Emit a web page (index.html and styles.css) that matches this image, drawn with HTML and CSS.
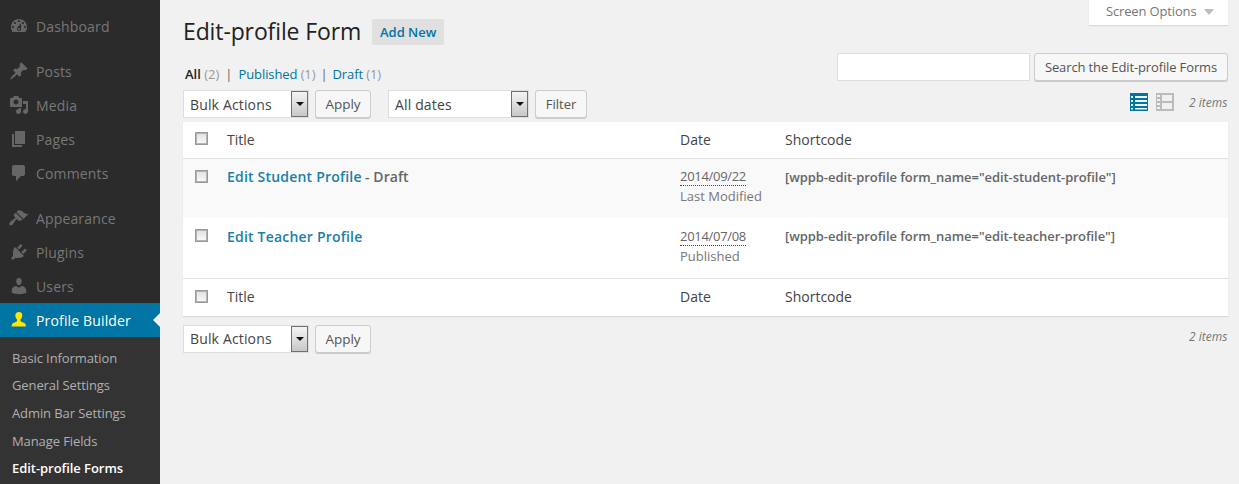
FILE: index.html
```html
<!DOCTYPE html>
<html lang="en">
<head>
<meta charset="utf-8">
<title>Edit-profile Forms</title>
<link rel="stylesheet" href="styles.css">
</head>
<body>
<div class="layout">
  <nav class="sidebar">
    <ul class="menu">
      <li class="item group-end"><svg class="ico" viewBox="0 0 20 20"><path d="M3.76 16h12.48c1.1-1.37 1.76-3.11 1.76-5 0-4.42-3.58-8-8-8s-8 3.58-8 8c0 1.89.66 3.63 1.76 5zM10 4c.55 0 1 .45 1 1s-.45 1-1 1-1-.45-1-1 .45-1 1-1zM6 6c.55 0 1 .45 1 1s-.45 1-1 1-1-.45-1-1 .45-1 1-1zm8 0c.55 0 1 .45 1 1s-.45 1-1 1-1-.45-1-1 .45-1 1-1zm-5.37 5.55L12 7v6c0 1.1-.9 2-2 2s-2-.9-2-2c0-.57.24-1.08.63-1.45zM4 10c.55 0 1 .45 1 1s-.45 1-1 1-1-.45-1-1 .45-1 1-1zm12 0c.55 0 1 .45 1 1s-.45 1-1 1-1-.45-1-1 .45-1 1-1zm-5 3c0-.55-.45-1-1-1s-1 .45-1 1 .45 1 1 1 1-.45 1-1z"/></svg>Dashboard</li>
      <li class="item"><svg class="ico" viewBox="0 0 20 20"><path d="M10.44 3.02l1.82-1.82 6.36 6.35-1.83 1.82c-1.05-.68-2.48-.57-3.41.36l-.75.75c-.92.93-1.04 2.35-.35 3.41l-1.83 1.82-2.41-2.41-2.8 2.79c-.42.42-3.38 2.71-3.8 2.29s1.86-3.39 2.28-3.81l2.79-2.79L4.1 9.36l1.83-1.82c1.05.69 2.48.57 3.4-.36l.75-.75c.93-.92 1.05-2.35.36-3.41z"/></svg>Posts</li>
      <li class="item"><svg class="ico" viewBox="0 0 20 20"><path d="M13 11V4c0-.55-.45-1-1-1h-1.67L9 1H5L3.67 3H2c-.55 0-1 .45-1 1v7c0 .55.45 1 1 1h10c.55 0 1-.45 1-1zM7 4.5c1.38 0 2.5 1.12 2.5 2.5S8.38 9.5 7 9.5 4.5 8.38 4.5 7 5.62 4.5 7 4.5zM14 6h5v10.5c0 1.38-1.12 2.5-2.5 2.5S14 17.88 14 16.5s1.12-2.5 2.5-2.5c.17 0 .34.02.5.05V9h-3V6zm-4 8.05V13h2v3.5c0 1.38-1.12 2.5-2.5 2.5S7 17.88 7 16.5 8.12 14 9.5 14c.17 0 .34.02.5.05z"/></svg>Media</li>
      <li class="item"><svg class="ico" viewBox="0 0 20 20"><path d="M6 15V2h10v13H6zm-1 1h8v2H3V5h2v11z"/></svg>Pages</li>
      <li class="item group-end"><svg class="ico" viewBox="0 0 20 20"><path d="M5 2h9c1.1 0 2 .9 2 2v7c0 1.1-.9 2-2 2h-2l-5 5v-5H5c-1.1 0-2-.9-2-2V4c0-1.1.9-2 2-2z"/></svg>Comments</li>
      <li class="item"><svg class="ico" viewBox="0 0 20 20"><path d="M14.48 11.06L7.41 3.99l1.5-1.5c.5-.56 2.3-.47 3.51.32 1.21.8 1.43 1.28 2.91 2.1 1.18.64 2.45 1.26 4.45.85zm-.71.71L6.7 4.7 4.93 6.47c-.39.39-.39 1.02 0 1.41l1.06 1.06c.39.39.39 1.03 0 1.42-.6.6-1.43 1.11-2.21 1.69-.78.58-1.9 1.08-2.66 1.85-1 1-1.25 2.3-.5 3.05.75.75 2.05.5 3.05-.5.77-.76 1.27-1.88 1.85-2.66.58-.78 1.09-1.61 1.69-2.21.39-.39 1.02-.39 1.41 0l1.06 1.06c.39.39 1.02.39 1.41 0z"/></svg>Appearance</li>
      <li class="item"><svg class="ico" viewBox="0 0 20 20"><path d="M13.11 4.36L9.87 7.6 8 5.73l3.24-3.24c.35-.34 1.05-.2 1.56.32.52.51.66 1.21.31 1.55zm-8 1.77l.91-1.12 9.01 9.01-1.19.84c-.71.71-2.63 1.16-3.82 1.16H6.14L4.9 17.26c-.59.59-1.54.59-2.12 0-.59-.58-.59-1.53 0-2.12l1.24-1.24v-3.88c0-1.13.4-3.19 1.09-3.89zm7.26 3.97l3.24-3.24c.34-.35 1.04-.21 1.55.31.52.51.66 1.21.31 1.55l-3.24 3.25z"/></svg>Plugins</li>
      <li class="item"><svg class="ico" viewBox="0 0 20 20"><path d="M10 9.25c-2.27 0-2.73-3.44-2.73-3.44C7 4.02 7.82 2 9.97 2c2.16 0 2.98 2.02 2.71 3.81 0 0-.41 3.44-2.68 3.44zm0 2.57L12.72 10c2.39 0 4.52 2.33 4.52 4.53v2.49s-3.65 1.13-7.24 1.13c-3.65 0-7.24-1.13-7.24-1.13v-2.49c0-2.25 1.94-4.48 4.47-4.48z"/></svg>Users</li>
      <li class="item active"><svg class="ico" viewBox="0 0 20 20"><path d="M10 2c2.300 0 3.500 1.700 3.300 3.800-.2 1.500-.9 3-1.700 3.700-.3.500-.2 1.500.4 1.900 1 .7 3 1 4 2 .6.600.9 1.800 1 3.100H2.600c.1-1.300.4-2.500 1-3.100 1-1 3-1.300 4-2 .6-.4.7-1.400.4-1.900-.8-.7-1.500-2.200-1.700-3.700C6.100 3.700 7.700 2 10 2z"/></svg>Profile Builder</li>
    </ul>
    <ul class="submenu">
      <li>Basic Information</li>
      <li>General Settings</li>
      <li>Admin Bar Settings</li>
      <li>Manage Fields</li>
      <li class="current">Edit-profile Forms</li>
    </ul>
  </nav>

  <main class="content">
    <header class="head">
      <h1 class="page-title">Edit-profile Form</h1>
      <a class="add-new">Add New</a>
      <div class="screen-options">Screen Options<span class="tri"></span></div>
    </header>

    <div class="row-status">
      <ul class="views">
        <li class="first"><b class="view-current">All</b> <span class="count">(2)</span><span class="sep">|</span></li>
        <li><a class="link">Published</a> <span class="count">(1)</span><span class="sep">|</span></li>
        <li><a class="link">Draft</a> <span class="count">(1)</span></li>
      </ul>
      <form class="search">
        <input class="search-input" type="text" aria-label="Search">
        <button class="btn btn-search" type="button">Search the Edit-profile Forms</button>
      </form>
    </div>

    <div class="tablenav">
      <div class="select sel-bulk"><span>Bulk Actions</span><i class="arrow"></i></div>
      <button class="btn btn-apply" type="button">Apply</button>
      <div class="select sel-dates"><span>All dates</span><i class="arrow"></i></div>
      <button class="btn btn-filter" type="button">Filter</button>
      <div class="nav-right">
        <svg class="mode" width="18" height="18" viewBox="0 0 18 18"><path fill="#0074a2" d="M0 0h18v18H0z"/><path fill="#f1f1f1" d="M1 3h2v2H1zM5 3h12v2H5zM1 7h2v2H1zM5 7h12v2H5zM1 11h2v2H1zM5 11h12v2H5zM1 15h2v1.500H1zM5 15h12v1.500H5z"/></svg>
        <svg class="mode" width="18" height="18" viewBox="0 0 18 18"><path fill="#bbb" d="M0 0h18v18H0z"/><path fill="#f1f1f1" d="M1 2h3v2H1zM1 6h3v2H1zM1 10h3v2H1zM1 14h3v2H1zM6 2h10v6H6zM6 10h10v6H6z"/></svg>
        <em class="items">2 items</em>
      </div>
    </div>

    <table class="list">
      <colgroup><col class="c-check"><col class="c-title"><col class="c-date"><col></colgroup>
      <thead>
        <tr class="hrow">
          <td><span class="cb"></span></td><td>Title</td><td>Date</td><td>Shortcode</td>
        </tr>
      </thead>
      <tbody>
        <tr class="row alt">
          <td><span class="cb"></span></td>
          <td class="t"><a class="name">Edit Student Profile</a> <span class="state">- Draft</span></td>
          <td class="d"><abbr class="date">2014/09/22</abbr><br>Last Modified</td>
          <td class="s">[wppb-edit-profile form_name="edit-student-profile"]</td>
        </tr>
        <tr class="row">
          <td><span class="cb"></span></td>
          <td class="t"><a class="name">Edit Teacher Profile</a></td>
          <td class="d"><abbr class="date">2014/07/08</abbr><br>Published</td>
          <td class="s">[wppb-edit-profile form_name="edit-teacher-profile"]</td>
        </tr>
      </tbody>
      <tfoot>
        <tr class="frow">
          <td><span class="cb"></span></td><td>Title</td><td>Date</td><td>Shortcode</td>
        </tr>
      </tfoot>
    </table>

    <div class="tablenav bottom">
      <div class="select sel-bulk"><span>Bulk Actions</span><i class="arrow"></i></div>
      <button class="btn btn-apply" type="button">Apply</button>
      <div class="nav-right"><em class="items">2 items</em></div>
    </div>
  </main>
</div>
</body>
</html>
```
FILE: styles.css
```css
* { box-sizing: border-box; }
html, body { margin: 0; padding: 0; height: 484px; overflow: hidden; }
body { background: #f1f1f1; color: #444; font-family: "Open Sans", sans-serif; font-size: 13px; }
ul { list-style: none; margin: 0; padding: 0; }

.layout { display: flex; height: 484px; }

.sidebar { width: 160px; flex: none; background: #2b2b2b; display: flex; flex-direction: column; padding-top: 9px; }
.item { height: 34px; display: flex; align-items: center; padding-left: 9px; font-size: 14px; color: #777; letter-spacing: .15px; }
.group-end { margin-bottom: 11px; }
.ico { width: 20px; height: 20px; fill: #666; margin-right: 7px; flex: none; }
.item.active { position: relative; background: #0074a2; color: #fff; }
.item.active .ico { fill: #ffe600; }
.item.active::after { content: ""; position: absolute; right: 0; top: 10px; border: 7px solid transparent; border-left-width: 0; border-right-color: #f1f1f1; }
.submenu { flex: 1; background: #333; padding-top: 6.8px; }
.submenu li { height: 27.6px; line-height: 28px; padding-left: 12px; font-size: 13px; color: #b0b0b0; letter-spacing: -.1px; }
.submenu .current { color: #fff; font-weight: 600; letter-spacing: -.05px; }

.content { flex: 1; min-width: 0; padding: 0 11px 0 23px; }

.head { display: flex; align-items: flex-start; height: 53px; }
.page-title { margin: 17px 0 0; font-size: 23px; line-height: 29px; font-weight: 400; color: #222; letter-spacing: -.12px; }
.add-new { margin: 19px 0 0 11px; height: 26px; width: 72px; background: #e0e0e0; color: #0074a2; font-weight: 600; font-size: 13px; line-height: 27px; text-align: center; border-radius: 2px; }
.screen-options { margin-left: auto; width: 139px; height: 25px; background: #fff; box-shadow: 0 1px 1px rgba(0,0,0,.1); color: #777; font-size: 13px; line-height: 23px; padding: 0 0 2px 17px; display: flex; align-items: center; letter-spacing: -.15px; }
.tri { margin-left: 7px; border: 5px solid transparent; border-top: 6px solid #bbb; border-bottom: 0; }

.row-status { display: flex; justify-content: space-between; height: 37px; }
.views { display: flex; margin: 12px 0 0 2px; line-height: 18px; font-size: 13px; letter-spacing: -.1px; }
.view-current { color: #222; font-weight: 600; }
.count { color: #999; }
.sep { margin: 0 5px; color: #666; }
.first { letter-spacing: 0; }
.first .sep { margin: 0 6px; }
.link { color: #0074a2; }
.search { display: flex; gap: 4px; height: 28px; }
.search-input { width: 193px; height: 28px; border: 1px solid #ddd; background: #fff; margin: 0; padding: 0; }

.btn { font-family: inherit; font-size: 13px; color: #555; background: #f7f7f7; border: 1px solid #ccc; border-radius: 3px; box-shadow: 0 1px 0 #ccc; height: 28px; padding: 0; margin: 0; }
.btn-search { width: 194px; letter-spacing: -.13px; }
.btn-apply { width: 56px; margin-left: 6px; font-size: 13.500px; }
.btn-filter { width: 52px; margin-left: 6px; }

.tablenav { display: flex; align-items: flex-start; height: 32px; }
.select { height: 28px; background: #fff; border: 1px solid #ddd; display: flex; align-items: center; justify-content: space-between; padding: 0 0 0 6px; font-size: 14px; color: #444; letter-spacing: .15px; }
.sel-bulk { width: 126px; }
.sel-dates { width: 141px; margin-left: 17px; }
.arrow { width: 17px; height: 26px; flex: none; border: 1px solid #707070; background: linear-gradient(#f4f4f4, #c8c8c8); display: flex; align-items: center; justify-content: center; }
.arrow::before { content: ""; border: 4px solid transparent; border-top: 4px solid #111; border-bottom: 0; }
.nav-right { margin-left: auto; display: flex; align-items: center; height: 24px; }
.mode { margin-left: 8px; display: block; }
.items { font-size: 12px; color: #777; margin-left: 15px; width: 39px; }

.list { width: 100%; table-layout: fixed; border-collapse: separate; border-spacing: 0; background: #fff; box-shadow: 0 1px 1px rgba(0,0,0,.1); }
.c-check { width: 34px; }
.c-title { width: 453px; }
.c-date { width: 105px; }
.list td { padding: 0 10px; vertical-align: top; }
.hrow td, .frow td { font-size: 14px; color: #444; line-height: 19px; }
.hrow td { height: 37px; padding-top: 8px; border-bottom: 1px solid #e1e1e1; }
.hrow .cb { margin-top: 2px; }
.frow td { height: 38px; padding-top: 8px; border-top: 1px solid #e1e1e1; }
.row td { height: 60px; padding-top: 9px; line-height: 20px; }
.row .cb { margin-top: 2px; }
.alt td { height: 59px; padding-top: 8px; background: #f9f9f9; }
.alt .cb { margin-top: 3px; }
.row .d { padding-top: 8px; }
.alt .d, .alt .s { padding-top: 7px; }
.row .s { padding-top: 8px; }
.cb { display: block; width: 13px; height: 13px; margin: 3px 0 0 2px; border: 1px solid #999; box-shadow: inset 0 0 0 1px #b4b4b4; background: linear-gradient(#e0e0e0, #fafafa); }
.name { color: #1a80a8; font-size: 14px; font-weight: 600; letter-spacing: .2px; }
.state { font-size: 14px; font-weight: 600; color: #666; letter-spacing: .05px; }
.d { font-size: 13px; color: #777; }
.date { border-bottom: 1px dotted #444; text-decoration: none; color: #666; letter-spacing: -.3px; }
.s { font-size: 13px; font-weight: 600; color: #666; letter-spacing: -.06px; }

.bottom { margin-top: 9px; }
.bottom .select { padding-bottom: 1px; }
.bottom .select .arrow { margin-bottom: -1px; }
.bottom .nav-right { height: 22px; }
```
